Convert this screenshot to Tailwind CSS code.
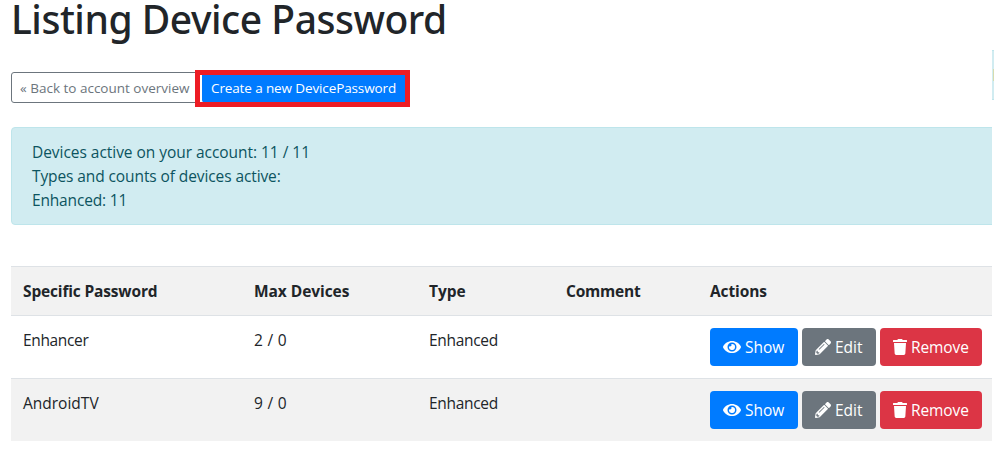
<!DOCTYPE html>
<html lang="en">
<head>
<meta charset="utf-8">
<title>Listing Device Password</title>
<script src="https://cdn.jsdelivr.net/npm/@tailwindcss/browser@4"></script>
</head>
<body class="relative h-[450px] w-[994px] overflow-hidden bg-white font-['Open_Sans','Noto_Sans',sans-serif] text-[15.5px] leading-6 text-[#212529]">
<svg class="hidden">
  <symbol id="eye" viewBox="0 0 576 512"><path d="M572.52 241.4C518.29 135.59 410.93 64 288 64S57.68 135.64 3.48 241.41a32.35 32.35 0 0 0 0 29.19C57.71 376.41 165.07 448 288 448s230.32-71.64 284.52-177.41a32.35 32.35 0 0 0 0-29.19zM288 400a144 144 0 1 1 144-144 143.93 143.93 0 0 1-144 144zm0-240a95.31 95.31 0 0 0-25.31 3.79 47.85 47.85 0 0 1-66.9 66.9A95.78 95.78 0 1 0 288 160z"/></symbol>
  <symbol id="pencil" viewBox="0 0 512 512"><path d="M497.9 142.1l-46.1 46.1c-4.7 4.7-12.3 4.7-17 0l-111-111c-4.7-4.7-4.7-12.3 0-17l46.1-46.1c18.7-18.7 49.1-18.7 67.9 0l60.1 60.1c18.8 18.7 18.8 49.1 0 67.9zM284.2 99.8L21.6 362.4.4 483.9c-2.9 16.4 11.4 30.6 27.8 27.8l121.5-21.3 262.6-262.6c4.7-4.7 4.7-12.3 0-17l-111-111c-4.8-4.7-12.4-4.7-17.1 0zM124.1 339.9c-5.5-5.5-5.5-14.3 0-19.8l154-154c5.5-5.5 14.3-5.5 19.8 0s5.5 14.3 0 19.8l-154 154c-5.5 5.5-14.3 5.5-19.8 0zM88 424h48v36.3l-64.5 11.3-31.1-31.1L51.7 376H88v48z"/></symbol>
  <symbol id="trash" viewBox="0 0 448 512"><path d="M432 32H312l-9.4-18.7A24 24 0 0 0 281.1 0H166.8a23.72 23.72 0 0 0-21.4 13.3L136 32H16A16 16 0 0 0 0 48v32a16 16 0 0 0 16 16h416a16 16 0 0 0 16-16V48a16 16 0 0 0-16-16zM53.2 467a48 48 0 0 0 47.9 45h245.8a48 48 0 0 0 47.9-45L416 128H32z"/></symbol>
</svg>

<main class="w-[992px] overflow-hidden pl-[11px]">
  <h1 class="h-[43px] whitespace-nowrap font-['Noto_Sans',sans-serif] text-[39px] font-medium leading-[38px] tracking-[-0.47px]">Listing Device Password</h1>

  <div class="mt-[29px] flex h-[31px] gap-1 whitespace-nowrap text-[13.5px] leading-[21px]">
    <a class="w-[187px] rounded-[3px] border border-[#6c757d] px-2 pt-[5px] text-[#6c757d]">« Back to account overview</a>
    <div class="relative">
      <a class="block h-[31px] w-[204px] rounded-[3px] border border-[#007bff] bg-[#007bff] px-2 pt-[5px] tracking-[-0.12px] text-white">Create a new DevicePassword</a>
      <div class="absolute -left-[7px] -top-[2px] h-[37px] w-[215px] border-5 border-[#ed1c24]"></div>
    </div>
  </div>

  <div class="-mr-5 mt-6 h-[98px] rounded border border-[#bee5eb] bg-[#d1ecf1] px-5 py-3 text-[#0c5460]">
    <p class="tracking-[-0.04px]">Devices active on your account: 11 / 11</p>
    <p class="tracking-[-0.1px]">Types and counts of devices active:</p>
    <p class="tracking-[-0.17px]">Enhanced: 11</p>
  </div>

  <table class="mt-[41px] w-[981px] table-fixed border-separate border-spacing-0 text-left [&_td]:border-t [&_td]:border-[#dee2e6] [&_td]:p-3 [&_td]:align-top [&_th]:border-t [&_th]:border-[#dee2e6] [&_th]:p-3">
    <colgroup><col class="w-[231px]"><col class="w-[175px]"><col class="w-[137px]"><col class="w-[144px]"><col></colgroup>
    <tbody>
      <tr class="bg-[#f2f2f2]">
        <th class="tracking-[-0.16px]">Specific Password</th><th class="tracking-[-0.06px]">Max Devices</th><th>Type</th><th class="tracking-[-0.2px]">Comment</th><th class="tracking-[-0.1px]">Actions</th>
      </tr>
      <tr>
        <td class="tracking-[-0.35px]">Enhancer</td><td class="tracking-[0.3px]">2 / 0</td><td class="tracking-[-0.3px]">Enhanced</td><td></td>
        <td>
          <div class="flex gap-1 whitespace-nowrap text-white">
            <a class="flex h-[38px] w-[88px] shrink-0 items-center gap-1 rounded bg-[#007bff] pl-[13px]"><svg class="h-4 w-[18px] shrink-0 fill-current"><use href="#eye"/></svg>Show</a>
            <a class="flex h-[38px] w-[74px] shrink-0 items-center gap-1 rounded bg-[#6c757d] pl-[13px]"><svg class="h-4 w-4 shrink-0 fill-current"><use href="#pencil"/></svg>Edit</a>
            <a class="flex h-[38px] w-[102px] shrink-0 items-center gap-1 rounded bg-[#dc3545] pl-[13px] tracking-[-0.1px]"><svg class="h-4 w-[14px] shrink-0 fill-current"><use href="#trash"/></svg>Remove</a>
          </div>
        </td>
      </tr>
      <tr class="bg-[#f2f2f2]">
        <td>AndroidTV</td><td class="tracking-[0.3px]">9 / 0</td><td class="tracking-[-0.3px]">Enhanced</td><td></td>
        <td>
          <div class="flex gap-1 whitespace-nowrap text-white">
            <a class="flex h-[38px] w-[88px] shrink-0 items-center gap-1 rounded bg-[#007bff] pl-[13px]"><svg class="h-4 w-[18px] shrink-0 fill-current"><use href="#eye"/></svg>Show</a>
            <a class="flex h-[38px] w-[74px] shrink-0 items-center gap-1 rounded bg-[#6c757d] pl-[13px]"><svg class="h-4 w-4 shrink-0 fill-current"><use href="#pencil"/></svg>Edit</a>
            <a class="flex h-[38px] w-[102px] shrink-0 items-center gap-1 rounded bg-[#dc3545] pl-[13px] tracking-[-0.1px]"><svg class="h-4 w-[14px] shrink-0 fill-current"><use href="#trash"/></svg>Remove</a>
          </div>
        </td>
      </tr>
    </tbody>
  </table>
</main>

<!-- edge of the neighbouring panel -->
<div class="absolute left-[992px] top-[50px] h-[50px] w-[2px] border-y border-[#bee5eb] bg-[#d1ecf1]">
  <div class="ml-px mt-[18px] h-3 w-px bg-[#d6dcae]"></div>
</div>
</body>
</html>
